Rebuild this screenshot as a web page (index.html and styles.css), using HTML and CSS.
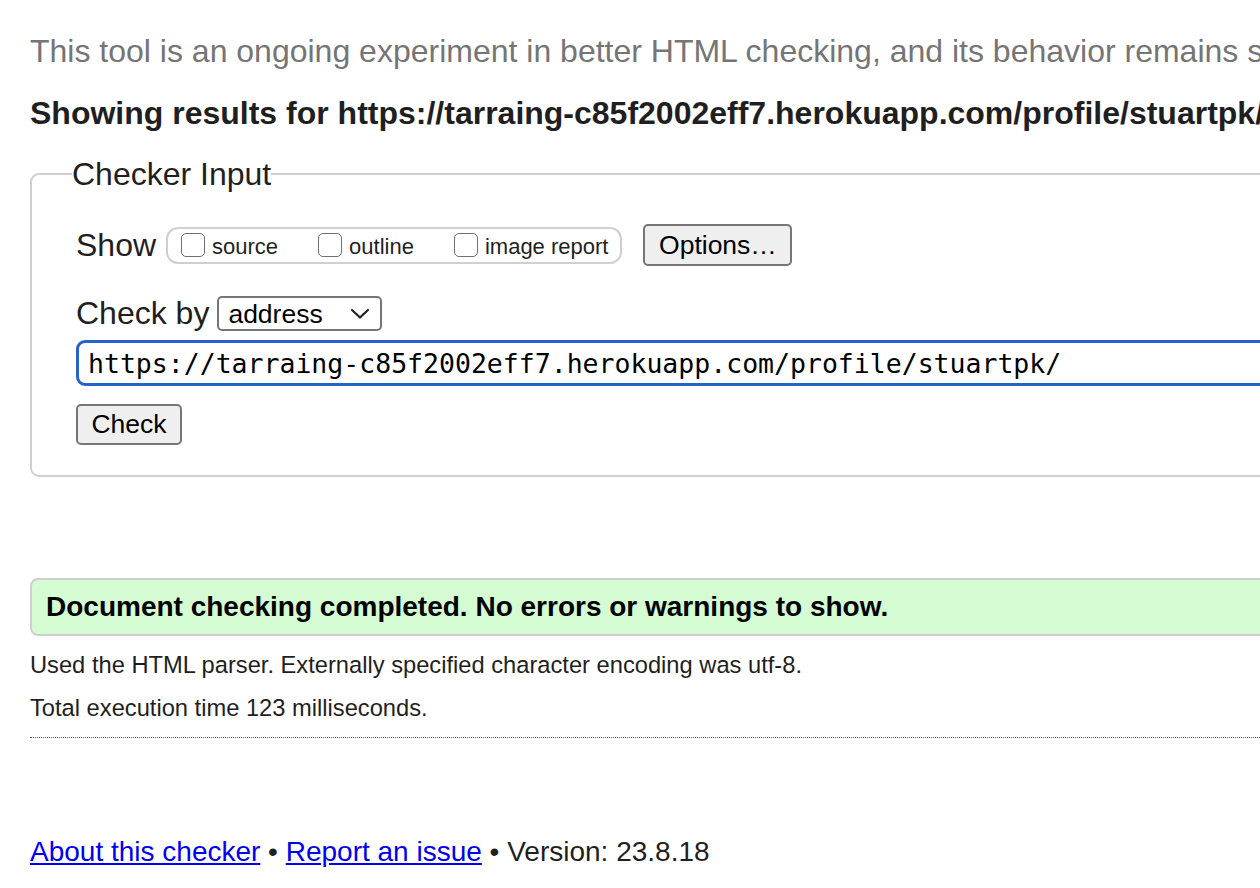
FILE: index.html
```html
<!DOCTYPE html>
<html lang="en">
<head>
<meta charset="utf-8">
<title>Nu Html Checker</title>
<link rel="stylesheet" href="styles.css">
</head>
<body>
<div class="page">
  <p class="intro">This tool is an ongoing experiment in better HTML checking, and its behavior remains subject to change</p>
  <h2 class="showing">Showing results for https://tarraing-c85f2002eff7.herokuapp.com/profile/stuartpk/</h2>
  <form class="checker">
    <fieldset class="fs">
      <legend class="legend">Checker Input</legend>
      <div class="row show-row">
        <span class="label">Show</span>
        <span class="group">
          <label class="opt"><input class="cb" type="checkbox">source</label>
          <label class="opt"><input class="cb" type="checkbox">outline</label>
          <label class="opt"><input class="cb" type="checkbox">image report</label>
        </span>
        <button class="btn options" type="button">Options…</button>
      </div>
      <div class="row by-row">
        <span class="label">Check by</span>
        <span class="select-wrap">
          <select class="select"><option>address</option></select>
          <svg class="chev" width="20" height="12" viewBox="0 0 20 12"><path d="M2 2 L10 9.5 L18 2" fill="none" stroke="#222" stroke-width="2.2" stroke-linecap="round" stroke-linejoin="round"/></svg>
        </span>
      </div>
      <input class="url" type="text" value="https://tarraing-c85f2002eff7.herokuapp.com/profile/stuartpk/">
      <div class="check-row"><button class="btn check" type="button">Check</button></div>
    </fieldset>
  </form>
  <div class="success">Document checking completed. No errors or warnings to show.</div>
  <p class="info">Used the HTML parser. Externally specified character encoding was utf-8.</p>
  <p class="info">Total execution time 123 milliseconds.</p>
  <hr class="dots">
  <p class="footer"><a href="#">About this checker</a> • <a href="#">Report an issue</a> • Version: 23.8.18</p>
</div>
</body>
</html>
```
FILE: styles.css
```css
html {
  overflow: hidden;
}
body {
  margin: 0;
  font-family: "Liberation Sans", Arial, Helvetica, sans-serif;
  color: #222;
  background: #fff;
}
.page {
  padding-left: 30px;
  width: 1500px;
}
.intro {
  margin: 33px 0 0;
  font-size: 32px;
  line-height: 36px;
  color: #757575;
  white-space: nowrap;
}
.showing {
  margin: 26px 0 0;
  font-size: 32px;
  line-height: 36px;
  font-weight: bold;
  color: #1f1f22;
  white-space: nowrap;
}
.checker {
  margin: 25px 0 0;
}
.fs {
  margin: 0;
  border: 2px solid #cfcfcf;
  border-radius: 9px;
  padding: 32px 0 30px 44px;
  min-width: 0;
}
.legend {
  font-size: 32px;
  line-height: 36px;
  padding: 0;
  margin-left: -4px;
  color: #1f1f22;
}
.row {
  display: flex;
  align-items: center;
}
.label {
  font-size: 32px;
  line-height: 35px;
  color: #1f1f22;
}
.group {
  margin-left: 10px;
  height: 37px;
  box-sizing: border-box;
  border: 2px solid #cfcfcf;
  border-radius: 12px;
  padding: 0 12px 0 13px;
  display: flex;
  align-items: center;
  gap: 40px;
}
.opt {
  display: flex;
  align-items: flex-end;
  font-size: 22px;
  line-height: 26px;
  color: #1f1f22;
  position: relative;
  top: 1px;
}
.cb {
  appearance: none;
  -webkit-appearance: none;
  margin: 0 7px 3px 0;
  width: 24px;
  height: 24px;
  box-sizing: border-box;
  border: 1.5px solid #6f6f6f;
  border-radius: 5px;
  background: #fff;
}
.btn {
  font-family: "Liberation Sans", Arial, Helvetica, sans-serif;
  font-size: 26.5px;
  color: #000;
  background: #efefef;
  border: 2px solid #767676;
  border-radius: 5px;
  padding: 0;
  box-sizing: border-box;
}
.options {
  margin-left: 21px;
  width: 149px;
  height: 42px;
}
.by-row {
  margin-top: 30px;
}
.select-wrap {
  position: relative;
  margin-left: 8px;
  display: inline-block;
  height: 35px;
}
.select {
  appearance: none;
  -webkit-appearance: none;
  width: 165px;
  height: 35px;
  box-sizing: border-box;
  border: 2px solid #767676;
  border-radius: 5px;
  background: #fff;
  font-family: "Liberation Sans", Arial, Helvetica, sans-serif;
  font-size: 26.5px;
  color: #000;
  padding: 0 0 0 9px;
  display: block;
}
.chev {
  position: absolute;
  right: 12px;
  top: 12px;
  pointer-events: none;
}
.url {
  display: block;
  margin: 9px 0 0;
  width: 1400px;
  height: 46px;
  box-sizing: border-box;
  border: 3px solid #2563c9;
  border-radius: 9px;
  outline: none;
  padding: 0 0 0 9px;
  font-family: "DejaVu Sans Mono", Menlo, monospace;
  font-size: 26.5px;
  color: #000;
  background: #fff;
}
.check-row {
  margin-top: 18px;
  display: flex;
}
.check {
  width: 106px;
  height: 41px;
}
.success {
  margin: 101px 0 0;
  height: 58px;
  box-sizing: border-box;
  background: #d5fbd3;
  border: 2px solid #cfcfcf;
  border-radius: 8px;
  padding-left: 14px;
  display: flex;
  align-items: center;
  font-size: 28px;
  font-weight: bold;
  color: #000;
  white-space: nowrap;
}
.info {
  margin: 15px 0 0;
  font-size: 23.7px;
  line-height: 28px;
  color: #1f1f22;
  white-space: nowrap;
}
.dots {
  margin: 15px 0 0;
  border: 0;
  border-top: 1px dotted #555;
  height: 0;
}
.footer {
  margin: 98px 0 0;
  font-size: 28px;
  line-height: 32px;
  color: #1f1f22;
  white-space: nowrap;
}
.footer a {
  color: #0000ee;
  text-decoration: underline;
}
```
